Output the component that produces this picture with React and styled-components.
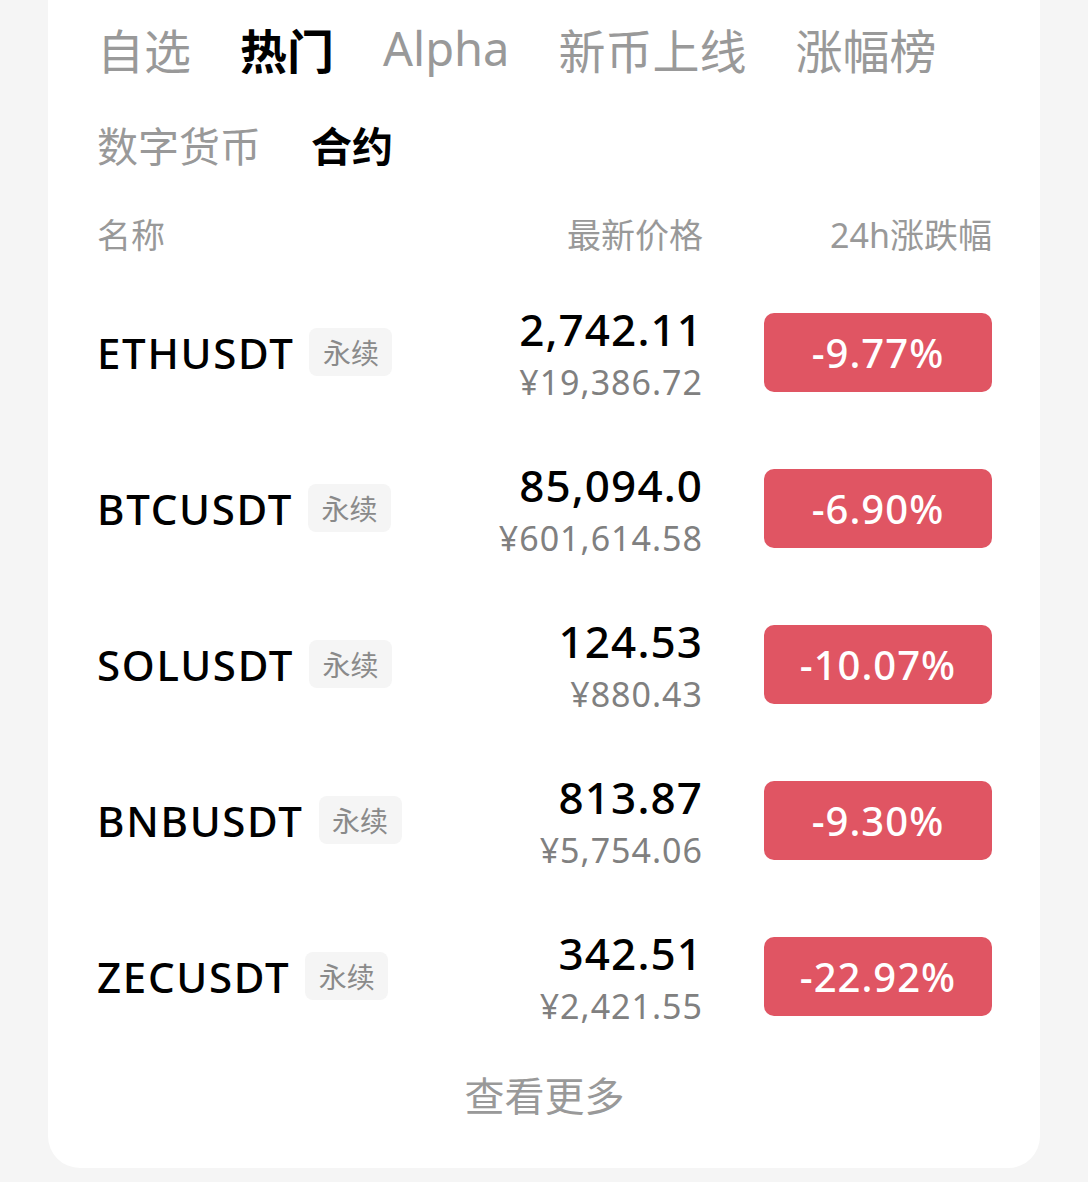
import React from "react";
import styled, { createGlobalStyle } from "styled-components";

const GlobalStyle = createGlobalStyle`
  body {
    margin: 0;
    background: #f5f5f5;
    font-family: "Noto Sans", "Noto Sans CJK SC", sans-serif;
  }
`;

const tabs = [
  { label: "自选" },
  { label: "热门", active: true },
  { label: "Alpha" },
  { label: "新币上线" },
  { label: "涨幅榜" },
];

const subTabs = [{ label: "数字货币" }, { label: "合约", active: true }];

const rows = [
  { symbol: "ETHUSDT", price: "2,742.11", cny: "¥19,386.72", change: "-9.77%" },
  { symbol: "BTCUSDT", price: "85,094.0", cny: "¥601,614.58", change: "-6.90%" },
  { symbol: "SOLUSDT", price: "124.53", cny: "¥880.43", change: "-10.07%" },
  { symbol: "BNBUSDT", price: "813.87", cny: "¥5,754.06", change: "-9.30%" },
  { symbol: "ZECUSDT", price: "342.51", cny: "¥2,421.55", change: "-22.92%" },
];

function App() {
  return (
    <Page>
      <GlobalStyle />
      <Card>
        <TabBar>
          {tabs.map((t) => (
            <Tab key={t.label} $active={t.active}>
              {t.label}
            </Tab>
          ))}
        </TabBar>
        <SubTabBar>
          {subTabs.map((t) => (
            <SubTab key={t.label} $active={t.active}>
              {t.label}
            </SubTab>
          ))}
        </SubTabBar>
        <HeaderRow>
          <HeadCell>名称</HeadCell>
          <HeadCell $right>最新价格</HeadCell>
          <HeadCell $right>24h涨跌幅</HeadCell>
        </HeaderRow>
        {rows.map((r) => (
          <Row key={r.symbol}>
            <NameCell>
              <Symbol>{r.symbol}</Symbol>
              <Tag>永续</Tag>
            </NameCell>
            <PriceCell>
              <Price>{r.price}</Price>
              <Cny>{r.cny}</Cny>
            </PriceCell>
            <Change>{r.change}</Change>
          </Row>
        ))}
        <More>查看更多</More>
      </Card>
    </Page>
  );
}

export default App;

const Page = styled.div`
  padding: 0 48px 14px;
`;

const Card = styled.div`
  background: #fff;
  border-radius: 0 0 32px 32px;
  padding: 0 48px 34px 49px;
`;

const TabBar = styled.div`
  display: flex;
  align-items: center;
  gap: 49px;
  height: 96px;
`;

const Tab = styled.div`
  font-size: 47px;
  font-weight: ${(p) => (p.$active ? 700 : 400)};
  color: ${(p) => (p.$active ? "#000" : "#999")};
`;

const SubTabBar = styled.div`
  display: flex;
  align-items: center;
  gap: 50px;
  height: 96px;
`;

const SubTab = styled.div`
  font-size: 41px;
  font-weight: ${(p) => (p.$active ? 700 : 400)};
  color: ${(p) => (p.$active ? "#000" : "#999")};
`;

const grid = `
  display: grid;
  grid-template-columns: 1fr auto 228px;
  column-gap: 61px;
  align-items: center;
`;

const HeaderRow = styled.div`
  ${grid}
  height: 82px;
`;

const HeadCell = styled.div`
  font-size: 34px;
  color: #999;
  text-align: ${(p) => (p.$right ? "right" : "left")};
`;

const Row = styled.div`
  ${grid}
  height: 156px;
`;

const NameCell = styled.div`
  display: flex;
  align-items: center;
  gap: 15px;
`;

const Symbol = styled.span`
  font-size: 42px;
  font-weight: 500;
  letter-spacing: 1.7px;
  color: #000;
`;

const Tag = styled.span`
  display: inline-flex;
  align-items: center;
  justify-content: center;
  width: 83px;
  height: 48px;
  border-radius: 8px;
  background: #f5f5f5;
  color: #8a8a8a;
  font-size: 28px;
`;

const PriceCell = styled.div`
  display: flex;
  flex-direction: column;
  align-items: flex-end;
`;

const Price = styled.div`
  font-size: 44px;
  font-weight: 500;
  letter-spacing: 1.1px;
  line-height: 60px;
  color: #000;
`;

const Cny = styled.div`
  font-size: 34px;
  letter-spacing: 1px;
  line-height: 46px;
  color: #808080;
`;

const Change = styled.div`
  display: flex;
  align-items: center;
  justify-content: center;
  height: 79px;
  border-radius: 10px;
  background: #e05563;
  color: #fff;
  font-size: 40px;
  font-weight: 500;
  letter-spacing: 1px;
`;

const More = styled.div`
  height: 80px;
  display: flex;
  align-items: center;
  justify-content: center;
  font-size: 40px;
  color: #999;
`;
